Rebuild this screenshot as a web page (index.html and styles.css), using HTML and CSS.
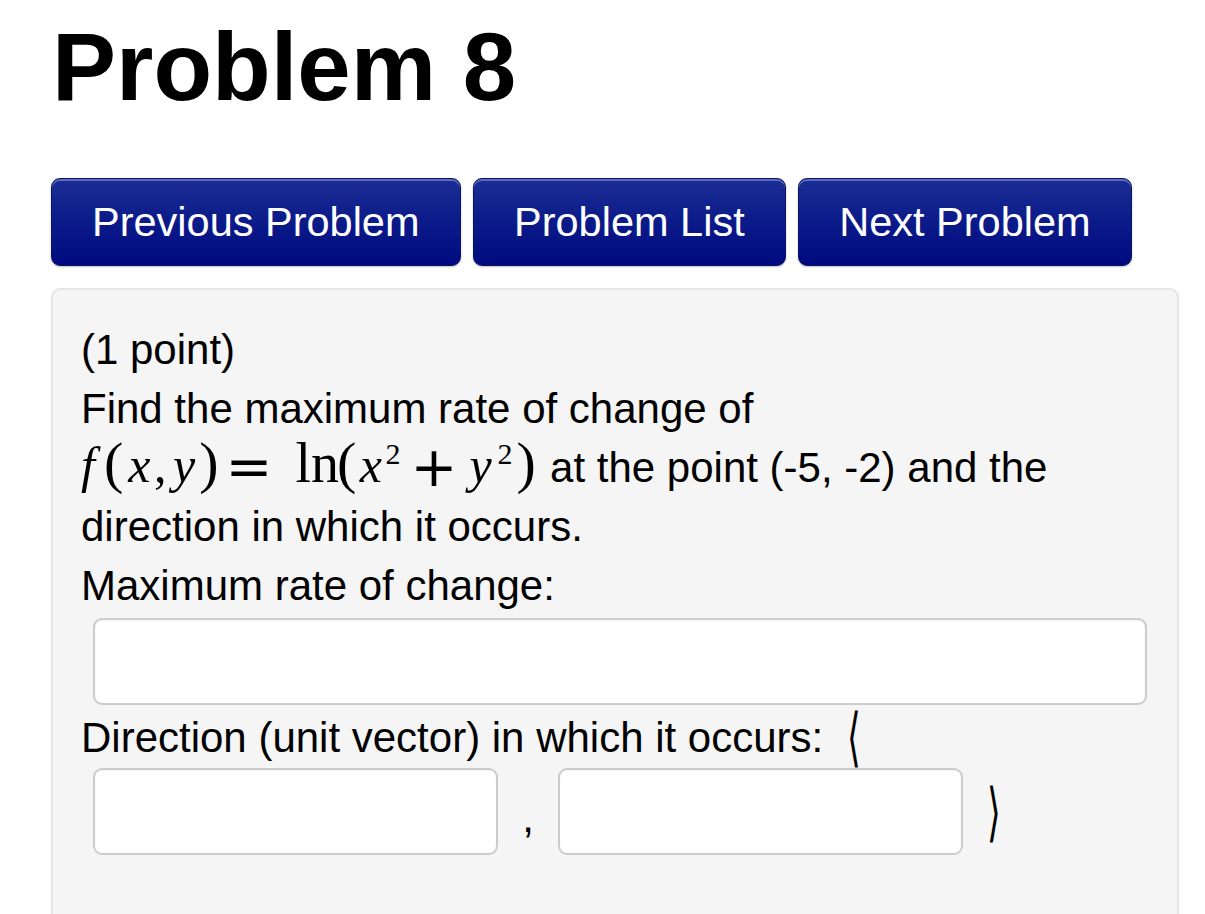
FILE: index.html
```html
<!DOCTYPE html>
<html>
<head>
<meta charset="utf-8">
<link rel="stylesheet" href="styles.css">
</head>
<body>
<div class="page">
  <h1 class="title">Problem 8</h1>
  <div class="nav">
    <a class="btn">Previous Problem</a>
    <a class="btn">Problem List</a>
    <a class="btn">Next Problem</a>
  </div>
  <div class="panel">
    <div class="line">(1 point)</div>
    <div class="line">Find the maximum rate of change of</div>
    <div class="line"><span class="math"><i class="m-f">f</i><span class="par m-p1">(</span><i class="m-x1">x</i><span class="m-cm">,</span><i class="m-y1">y</i><span class="par m-p2">)</span><span class="op m-eq">=</span><span class="fn">ln</span><span class="par m-p3">(</span><i class="m-x2">x</i><span class="sup m-s1">2</span><span class="op m-plus">+</span><i class="m-y2">y</i><span class="sup m-s2">2</span><span class="par m-p4">)</span></span> at the point (-5, -2) and the</div>
    <div class="line">direction in which it occurs.</div>
    <div class="line">Maximum rate of change:</div>
    <div class="input wide"></div>
    <div class="line">Direction (unit vector) in which it occurs: <span class="angle open">⟨</span></div>
    <div class="vec">
      <div class="input small"></div>
      <span class="comma">,</span>
      <div class="input small second"></div>
      <span class="angle close">⟩</span>
    </div>
  </div>
</div>
</body>
</html>
```
FILE: styles.css
```css
html, body {
  margin: 0;
  padding: 0;
  background: #ffffff;
}
body {
  font-family: "Liberation Sans", Arial, sans-serif;
  color: #000;
  overflow: hidden;
}
.page {
  padding: 0 26px 0 51px;
}
.title {
  font-size: 96px;
  font-weight: bold;
  line-height: 106px;
  margin: 14px 0 0 1px;
}
.nav {
  display: flex;
  gap: 12.5px;
  margin-top: 58px;
}
.btn {
  display: block;
  height: 86px;
  line-height: 86px;
  padding: 0 40px;
  font-size: 41.5px;
  color: #fff;
  border: 1px solid #0a1463;
  border-radius: 9px;
  background: linear-gradient(#1c2e95 0%, #0c1c8a 45%, #000a80 100%);
  box-shadow: inset 0 2px 0 rgba(140,160,230,0.55), 0 1px 2px rgba(0,0,0,0.25);
  white-space: nowrap;
}
.panel {
  margin-top: 22px;
  background: #f5f5f5;
  border: 2px solid #e6e6e6;
  border-radius: 9px;
  padding: 30px 28px 80px 28px;
  font-size: 42px;
  line-height: 59px;
}
.line {
  white-space: nowrap;
}

/* math */
.math {
  font-family: "Liberation Serif", "Times New Roman", serif;
  font-size: 50px;
  line-height: 0;
  margin-right: 2.5px;
}
.math i { font-style: italic; }
.math .par { font-size: 58px; }
.math .op {
  font-family: "DejaVu Sans ExtraLight", "DejaVu Sans", sans-serif;
  font-size: 56px;
  position: relative;
  top: 4px;
}
.math .fn { font-size: 56px; margin-left: 23px; }
.math .sup {
  font-size: 30px;
  position: relative;
  top: -18px;
}
.m-p1 { margin-left: 9px; }
.m-x1 { margin-left: 5px; }
.m-cm { margin-left: 3.5px; }
.m-y1 { margin-left: 6.5px; }
.m-p2 { margin-left: 4px; }
.m-eq { margin-left: 7px; }
.m-p3 { margin-left: -2px; }
.m-x2 { margin-left: 3.5px; }
.m-s1 { margin-left: 3.5px; }
.m-plus { margin-left: 10px; }
.m-y2 { margin-left: 12px; }
.m-s2 { margin-left: 6px; }
.m-p4 { margin-left: 4px; }

.input {
  background: #fff;
  border: 2px solid #cccccc;
  border-radius: 9px;
  box-shadow: inset 0 1px 2px rgba(0,0,0,0.06);
  height: 83px;
  box-sizing: content-box;
}
.wide {
  margin: 3px 0 3px 12px;
  width: 1050px;
}
.vec {
  display: flex;
  align-items: center;
  margin-top: 1px;
}
.small {
  width: 401px;
  margin-left: 12px;
}
.second {
  margin-left: 0;
}
.comma {
  width: 60px;
  text-align: center;
  padding-top: 12px;
}
.angle {
  display: inline-block;
  font-family: "DejaVu Sans ExtraLight", "DejaVu Sans", sans-serif;
  font-weight: 200;
  font-size: 44px;
  line-height: 0;
  transform: scale(0.8, 1.45);
}
.open {
  margin-left: 10px;
}
.close {
  margin-left: 22px;
  line-height: 1;
}
```
